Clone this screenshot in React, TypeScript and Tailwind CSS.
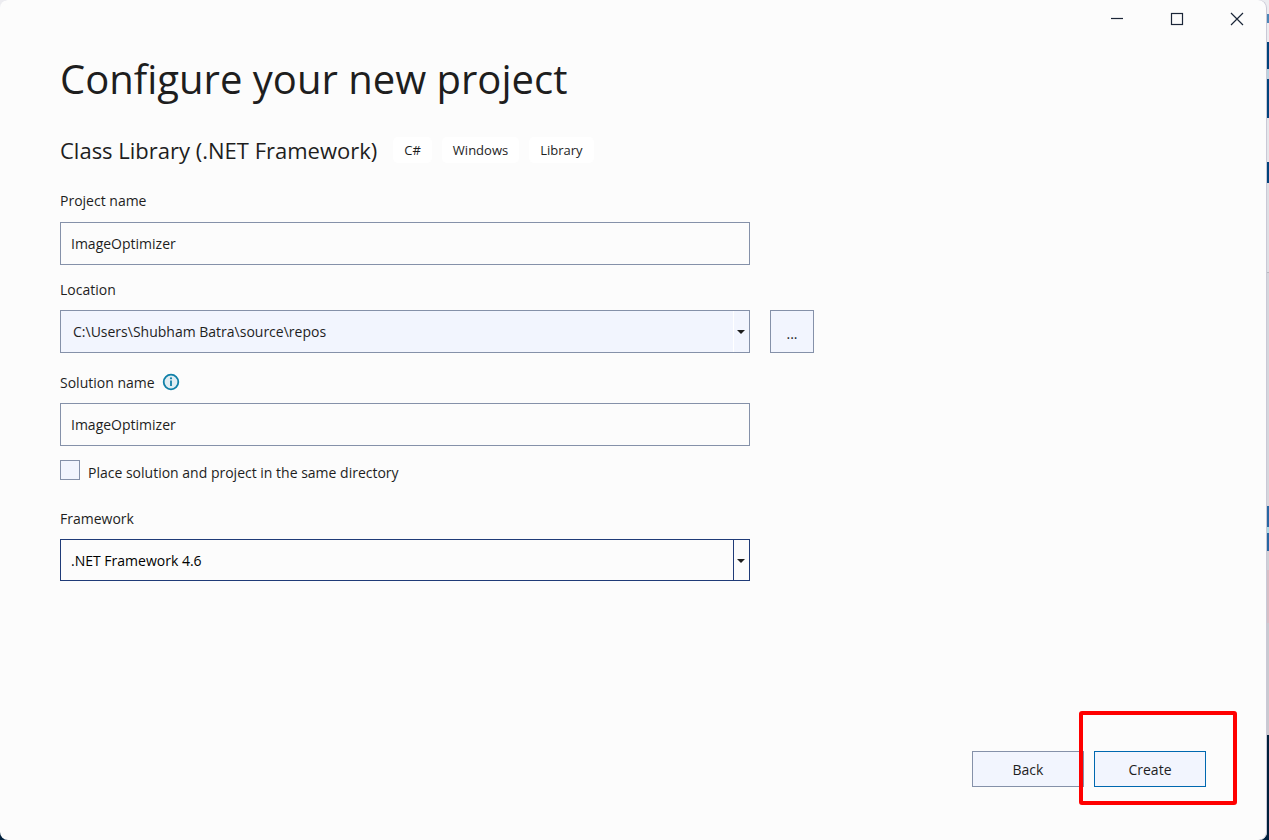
import React from "react";

const CONTROL_TEXT = "text-[14px] text-[#1e1e1e]";
const FIELD =
  "block w-full h-[43px] border border-[#8591a9] bg-[#fcfcfc] px-[10px] outline-none";
const BUTTON = "border bg-[#f2f5fe] h-9 w-28";

function DropArrow() {
  return (
    <svg width="8" height="4" viewBox="0 0 8 4" aria-hidden="true">
      <path d="M0 0H8L4 4Z" fill="#1e1e1e" />
    </svg>
  );
}

function Backdrop() {
  return (
    <div
      aria-hidden="true"
      className="col-start-1 row-start-1 flex h-full w-full flex-col bg-[#cfced6]"
    >
      <div className="h-[14px] bg-[#ececf0]" />
      <div className="h-[9px] bg-[#4a86b8]" />
      <div className="h-[19px] bg-[#ececf0]" />
      <div className="h-[27px] bg-[#00437c]" />
      <div className="h-[10px] bg-[#b9d3e2]" />
      <div className="h-[39px] bg-[#00437c]" />
      <div className="h-[44px] bg-[#e6e6ea]" />
      <div className="h-[21px] bg-[#00437c]" />
      <div className="h-[89px] bg-[#dedee3]" />
      <div className="h-px bg-[#b9b9c0]" />
      <div className="h-[233px] bg-[#d6d6dc]" />
      <div className="h-[21px] bg-[#2767a3]" />
      <div className="h-[6px] bg-[#a9dbea]" />
      <div className="h-[18px] bg-[#2767a3]" />
      <div className="h-[19px] bg-[#d0d0d6]" />
      <div className="h-[53px] bg-[#d6bfc6]" />
      <div className="h-[112px] bg-[#cac9d0]" />
      <div className="grow bg-[#00203c]" />
    </div>
  );
}

function WindowControls() {
  const button = "flex h-[38px] w-15 items-center justify-center";
  return (
    <div className="flex justify-end">
      <button type="button" aria-label="Minimize" className={button}>
        <svg width="14" height="14" viewBox="0 0 14 14">
          <path d="M1 6.5H13" stroke="#1b2638" strokeWidth="1.2" />
        </svg>
      </button>
      <button type="button" aria-label="Maximize" className={button}>
        <svg width="14" height="14" viewBox="0 0 14 14" fill="none">
          <rect x="1.5" y="1.5" width="11" height="11" stroke="#1b2638" strokeWidth="1.2" />
        </svg>
      </button>
      <button type="button" aria-label="Close" className={button}>
        <svg width="14" height="14" viewBox="0 0 14 14">
          <path d="M1 1L13 13M13 1L1 13" stroke="#1b2638" strokeWidth="1.2" />
        </svg>
      </button>
    </div>
  );
}

function Tag({ children }: { children: React.ReactNode }) {
  return (
    <li className="flex h-[26px] items-center rounded-[5px] bg-white px-[11px] pt-px text-[13px]">
      {children}
    </li>
  );
}

export default function App() {
  return (
    <div className="grid min-h-screen font-['Open_Sans','Noto_Sans',sans-serif] text-[#1e1e1e]">
      <Backdrop />
      <main className="z-10 col-start-1 row-start-1 mr-[2px] flex flex-col rounded-lg bg-[#fcfcfc] shadow-[inset_-1px_0_0_#c9c9d6]">
        <WindowControls />
        <form
          className="flex grow flex-col pt-[13px] pr-[61px] pl-15"
          onSubmit={(e) => e.preventDefault()}
        >
          <h1 className="text-[40px] leading-14">Configure your new project</h1>

          <div className="mt-[30px] flex items-center gap-4">
            <h2 className="text-[22px] leading-[26px]">Class Library (.NET Framework)</h2>
            <ul className="flex gap-[10px]">
              <Tag>C#</Tag>
              <Tag>Windows</Tag>
              <Tag>Library</Tag>
            </ul>
          </div>

          <div className="mt-[28px] w-full max-w-[754px] text-[14px] leading-5">
            <div className="mr-16">
              <label htmlFor="project" className="block">Project name</label>
              <input id="project" defaultValue="ImageOptimizer" className={`${FIELD} ${CONTROL_TEXT} mt-[11px]`} />
            </div>

            <label htmlFor="location" className="mt-[15px] block">Location</label>
            <div className="mt-[10px] flex gap-5">
              <div className="grid grow">
                <select
                  id="location"
                  className={`${CONTROL_TEXT} col-start-1 row-start-1 h-[43px] w-full appearance-none border border-[#8591a9] bg-[#f2f5fe] pl-3 outline-none`}
                >
                  <option>C:\Users\Shubham Batra\source\repos</option>
                </select>
                <span className="pointer-events-none col-start-1 row-start-1 my-px mr-px flex w-4 items-center justify-self-end border-l border-white pl-[3px]">
                  <DropArrow />
                </span>
              </div>
              <button type="button" aria-label="Browse" className="h-[43px] w-11 border border-[#8591a9] bg-[#f2f5fe] pt-1">
                ...
              </button>
            </div>

            <div className="mr-16">
              <div className="mt-5 flex items-center gap-[7px]">
                <label htmlFor="solution">Solution name</label>
                <svg width="18" height="18" viewBox="0 0 18 18" role="img" aria-label="Information" className="self-start">
                  <circle cx="9" cy="9" r="7.3" fill="#e0edf3" stroke="#1080a8" strokeWidth="1.8" />
                  <path d="M9 7.5V13" stroke="#1080a8" strokeWidth="1.8" />
                  <circle cx="9" cy="5.3" r="1.1" fill="#1080a8" />
                </svg>
              </div>
              <input id="solution" defaultValue="ImageOptimizer" className={`${FIELD} ${CONTROL_TEXT} mt-[10px]`} />

              <div className="mt-[14px] flex items-start gap-2">
                <input
                  id="same"
                  type="checkbox"
                  className="size-5 appearance-none border border-[#8591a9] bg-[#f2f5fe] checked:bg-[#0066b4]"
                />
                <label htmlFor="same" className="pt-[3px]">
                  Place solution and project in the same directory
                </label>
              </div>

              <label htmlFor="framework" className="mt-[26px] block">Framework</label>
              <div className="mt-[10px] grid">
                <select
                  id="framework"
                  className="col-start-1 row-start-1 h-[42px] w-full appearance-none border border-[#1f3b78] bg-[#fcfcfc] pt-px pl-[10px] text-[14px] text-black outline-none"
                >
                  <option>.NET Framework 4.6</option>
                </select>
                <span className="pointer-events-none col-start-1 row-start-1 flex w-[17px] items-center justify-self-end border-x border-[#1f3b78] pt-px pl-[3px]">
                  <DropArrow />
                </span>
              </div>
            </div>
          </div>

          <div className="mt-auto mb-[53px] flex justify-end gap-[10px] text-[14px]">
            <button type="button" className={`${BUTTON} border-[#8591a9]`}>Back</button>
            <div className="relative">
              <button type="submit" className={`${BUTTON} block border-[#0068b0]`}>Create</button>
              <div className="pointer-events-none absolute -top-10 -right-[31px] -bottom-[18px] -left-[15px] rounded-[3px] border-4 border-[#ff0000]" />
            </div>
          </div>
        </form>
      </main>
    </div>
  );
}
